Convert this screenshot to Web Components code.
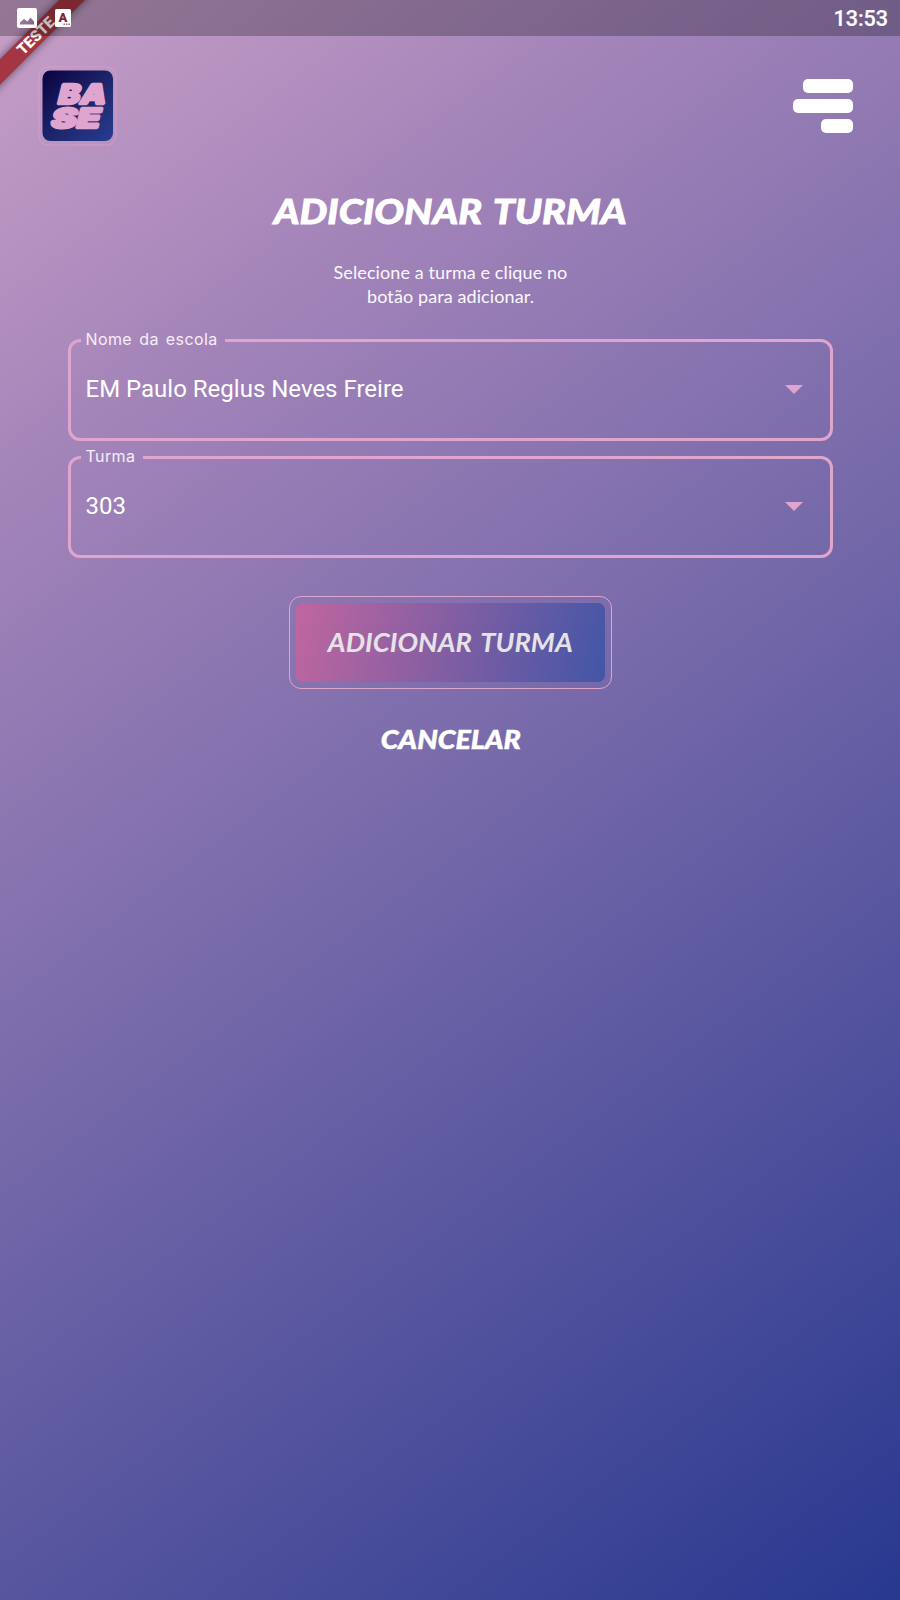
<!DOCTYPE html>
<html lang="pt-BR">
<head>
<meta charset="utf-8">
<title>Adicionar turma</title>
<style>html,body{margin:0;padding:0}body{width:900px;height:1600px;overflow:hidden}</style>
</head>
<body>
<turma-app></turma-app>
<script>
const define = (name, html) => customElements.define(name, class extends HTMLElement {
  constructor() {
    super();
    const t = document.createElement('template');
    t.innerHTML = html;
    this.attachShadow({ mode: 'open' }).append(t.content.cloneNode(true));
  }
});

define('status-bar', `
<style>
:host{display:flex;align-items:center;height:36px;box-sizing:border-box;padding:0 12px 0 16px;background:rgba(0,0,0,.25);position:relative;z-index:3;font:500 21.5px Roboto,sans-serif;color:#fff}
svg{display:block;width:56px;height:22px}
span{margin-left:auto;line-height:36px;padding-top:2px;-webkit-text-stroke:.2px #fff}
</style>
<svg viewBox="0 0 56 22">
<path fill="#fff" fill-rule="evenodd" d="M3 1H19a2 2 0 0 1 2 2V19a2 2 0 0 1-2 2H3a2 2 0 0 1-2-2V3a2 2 0 0 1 2-2ZM4 17.500H18V14.500L14.500 10.500 11.500 14.500 8 12 4 15.500Z"/>
<rect x="39" y="2" width="16" height="18" rx="1.500" fill="#fff"/>
<text x="47" y="14.500" text-anchor="middle" font-family="Roboto" font-weight="900" font-size="13" fill="#7d2736">A</text>
<path fill="#9a6b80" d="M47.500 16.500h1.500v1.500h-1.500zM50 16.500h1.500v1.500h-1.500zM52.500 16.500h1.500v1.500h-1.500z"/>
</svg><span>13:53</span>`);

define('corner-ribbon', `
<style>
:host{display:block;position:absolute;left:0;top:0;width:130px;height:130px;overflow:hidden;z-index:2}
div{position:absolute;left:-64px;top:27px;width:200px;height:18px;line-height:18px;text-align:center;transform:rotate(-45deg);background:#a53542;box-shadow:0 0 9px rgba(0,0,0,.5);color:#fff;font:900 15.300px/18px Roboto,sans-serif}
</style><div><slot></slot></div>`);

define('base-logo', `
<style>:host{display:block;width:80px;height:80px}svg{display:block}</style>
<svg width="80" height="80" viewBox="0 0 80 80">
<defs><linearGradient id="g" x1="0" y1="0" x2="1" y2="1"><stop offset="0" stop-color="#0b0140"/><stop offset=".5" stop-color="#1c2469"/><stop offset="1" stop-color="#283c91"/></linearGradient></defs>
<rect x="1" y="1" width="77" height="78" rx="9" fill="none" stroke="#dfa5cd" stroke-opacity=".6"/>
<rect x="4.500" y="4.500" width="70.500" height="70.500" rx="8" fill="url(#g)"/>
<g fill="#dfa5cf" stroke="#dfa5cf" stroke-width="2.400" stroke-linejoin="bevel" font-family="Inter" font-weight="900" font-size="27.500">
<text transform="translate(18.500 38.300) skewX(-14)" textLength="48" lengthAdjust="spacingAndGlyphs">BA</text>
<text transform="translate(11.500 62.300) skewX(-14)" textLength="49" lengthAdjust="spacingAndGlyphs">SE</text>
</g></svg>`);

define('menu-button', `
<style>:host{display:flex;flex-direction:column;align-items:flex-end;gap:6px;width:60px}i{display:block;height:14px;border-radius:5px;background:#fff}
i:nth-of-type(1){width:50px}i:nth-of-type(2){width:60px}i:nth-of-type(3){width:32px}</style><i></i><i></i><i></i>`);

define('top-bar', `
<style>:host{display:flex;justify-content:space-between;align-items:flex-start;padding:30px 47px 0 38px;height:88px}menu-button{margin-top:13px}</style>
<base-logo></base-logo><menu-button></menu-button>`);

define('select-field', `
<style>
:host{display:block}
fieldset{margin:0;padding:0 27px 0 14px;box-sizing:border-box;width:765px;height:110px;border:3px solid #dfa5cd;border-radius:12px;min-width:0;color:#fff}
legend{box-sizing:border-box;width:var(--notch);padding:0 0 0 5px;margin-left:-4px;height:18px;font:400 16px/16px Inter,sans-serif;letter-spacing:.4px;word-spacing:2.200px;color:#f6eef8;white-space:nowrap}
.row{display:flex;align-items:center;justify-content:space-between;height:80px;padding-left:1px;font:400 24px Roboto,sans-serif}
svg{display:block}
</style>
<fieldset><legend><slot name="label"></slot></legend><div class="row"><slot></slot><svg width="18" height="9"><path d="M0 0H18L9 9Z" fill="#dfa5cd"/></svg></div></fieldset>`);

define('primary-button', `
<style>
:host{display:block;box-sizing:border-box;width:323px;height:93px;padding:6px;border:1.500px solid #dfa5cd;border-radius:12px}
button{display:block;width:100%;height:100%;margin:0;padding:0 0 2px;border:0;border-radius:7px;background:linear-gradient(104deg,#c0669f,#4256a7);color:#e6e3e8;font:italic 700 26px Lato,sans-serif}
span{display:inline-block;word-spacing:3px;transform:scaleX(1.053)}
</style><button><span><slot></slot></span></button>`);

define('turma-app', `
<style>
:host{display:block;position:relative;width:900px;height:1600px;overflow:hidden;background:linear-gradient(143deg,#c89fc7 0%,#a384b9 22%,#7166a8 53.500%,#28388f 100%);color:#fff;font-family:Lato,sans-serif}
main{display:flex;flex-direction:column;align-items:center}
h1{margin:34px 0 0 1px;font:italic 900 35px/44px Lato,sans-serif;white-space:nowrap;word-spacing:3px;transform:scaleX(1.123);-webkit-text-stroke:.8px #fff}
p{margin:28px 0 0 1px;font-size:18px;line-height:24px;letter-spacing:.1px;text-align:center;color:#fbf7fd}
.l1,.l2{display:block}
.fields{display:flex;flex-direction:column;gap:7px;margin-top:23px}
primary-button{margin:38px 0 0 1px}
.cancel{margin:34px 0 0 1px;font:italic 900 26px/32px Lato,sans-serif;transform:scaleX(1.1);-webkit-text-stroke:.5px #fff}
</style>
<corner-ribbon>TESTE</corner-ribbon>
<status-bar></status-bar>
<top-bar></top-bar>
<main>
<h1>ADICIONAR TURMA</h1>
<p><span class="l1">Selecione a turma e clique no</span><span class="l2">botão para adicionar.</span></p>
<div class="fields">
<select-field style="--notch:144px"><span slot="label">Nome da escola</span>EM Paulo Reglus Neves Freire</select-field>
<select-field style="--notch:62px"><span slot="label">Turma</span>303</select-field>
</div>
<primary-button>ADICIONAR TURMA</primary-button>
<div class="cancel">CANCELAR</div>
</main>`);
</script>
</body>
</html>
